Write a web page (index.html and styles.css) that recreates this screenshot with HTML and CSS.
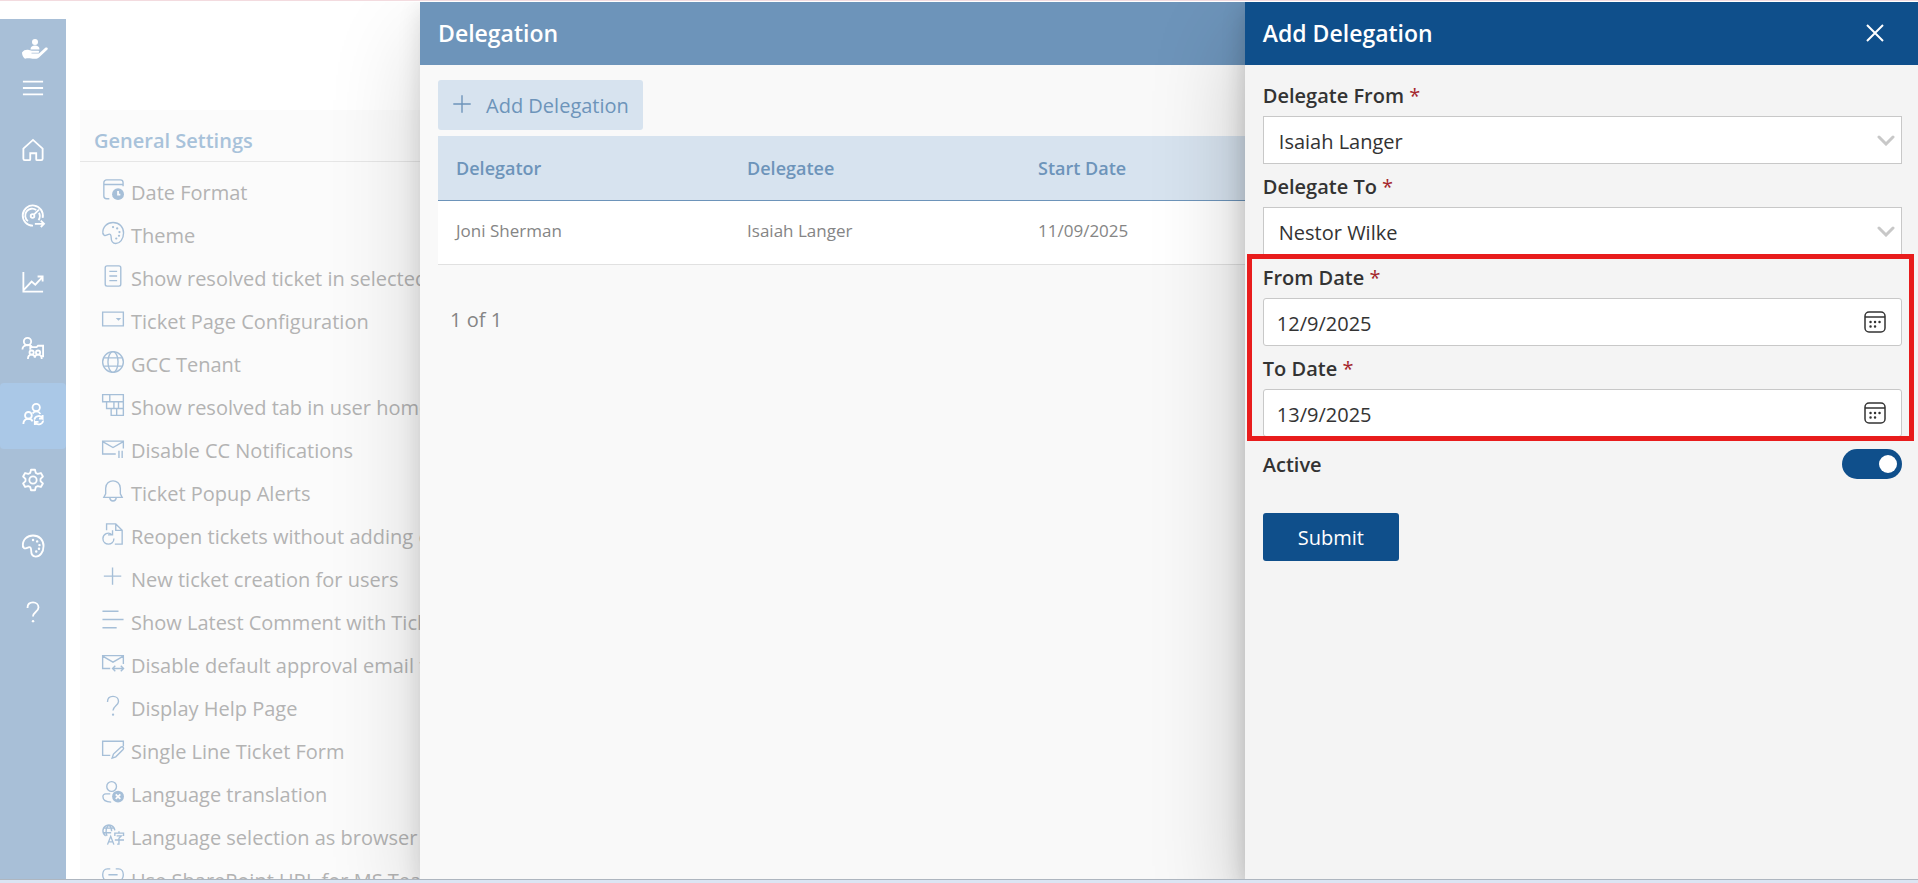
FILE: index.html
```html
<!DOCTYPE html>
<html lang="en">
<head>
<meta charset="utf-8">
<title>Delegation</title>
<link rel="stylesheet" href="styles.css">
</head>
<body>
<main class="app">
  <nav class="rail" aria-label="Main">
    <div class="rail-logo">
      <svg class="icon-logo" viewBox="0 0 26 20"><circle cx="13" cy="3" r="3"/><path d="M8.500 10.500c0-3 2-4 4.500-4s4.500 1 4.500 4z"/><path d="M0 13.500c2-2.500 4-3 7-2.500l3 .8h6c1.500 0 1.500 2 0 2H9.500v.6H17l6-5.500c1.500-1.200 3.500 0 2.500 1.500l-7.500 7c-1.500 1.700-3 2.600-6 2.400-3 0-5-1.200-9 0C1 18 0 16 0 13.500z"/></svg>
    </div>
    <button class="rail-menu" aria-label="Toggle menu"><svg class="icon" viewBox="0 0 24 24"><path d="M1 5h22M1 12h22M1 19h22"/></svg></button>
    <a class="rail-item" href="#" aria-label="Home"><svg class="icon" viewBox="0 0 24 24"><path d="M1.500 10.500 12 1l10.500 9.500V21.500a1.500 1.500 0 0 1-1.500 1.500h-4.500a1 1 0 0 1-1-1v-6.500H9V22a1 1 0 0 1-1 1H3a1.500 1.500 0 0 1-1.500-1.500z"/></svg></a>
    <a class="rail-item" href="#" aria-label="Dashboard"><svg class="icon" viewBox="0 0 24 24"><path d="M12 22.500A11 11 0 1 1 22.500 14"/><path d="M6.500 17.500a7.500 7.500 0 0 1 9-12M18.500 8.500a7.500 7.500 0 0 1-.5 8M13 10.500 18.500 5"/><circle cx="11.500" cy="12" r="2"/><path d="M14 20.500h9.500M20.500 17l3.500 3.500-3.500 3.500"/></svg></a>
    <a class="rail-item" href="#" aria-label="Reports"><svg class="icon" viewBox="0 0 24 24"><path d="M1.500 1v21.500H23M2 20.500l8.500-9 4 3.500 8-8.500M17 6h5.500v5.500"/></svg></a>
    <a class="rail-item" href="#" aria-label="Teams"><svg class="icon" viewBox="0 0 24 24"><circle cx="6" cy="5" r="4"/><path d="M.5 13.500C.5 8 10 7 11 12M9 14v-3h7l1.500-1.500H23V21h-2"/><circle cx="10.500" cy="17" r="2.300"/><circle cx="17.500" cy="17" r="2.300"/><path d="M6.500 24c0-6 7-6 7.500-1.500C14.500 18 21.500 18 21.500 24"/></svg></a>
    <a class="rail-item rail-item-active" href="#" aria-label="Delegation" aria-current="page"><svg class="icon" viewBox="0 0 24 24"><circle cx="15.500" cy="5" r="4"/><circle cx="7" cy="13.500" r="3.700"/><path d="M1.500 23c0-6.500 8-7.500 10-3M11.500 11.500c2-3.500 7-3 8.500.5M13.500 18c1-4.500 7-5 9-1.500V13M22.500 17h-4M23 19.500c-1 4.500-7 5-9 1.500v3M14 20.500h4"/></svg></a>
    <a class="rail-item" href="#" aria-label="Settings"><svg class="icon" viewBox="0 0 24 24"><path stroke-linejoin="round" d="M9.800.8h4.400l.8 3.400 2.200 1.200 3.400-1 2.200 3.800-2.600 2.500v2.600l2.600 2.500-2.200 3.800-3.400-1-2.200 1.200-.8 3.400H9.800L9 19.800l-2.200-1.200-3.400 1-2.200-3.800 2.600-2.500v-2.600L1.200 8.200l2.200-3.800 3.400 1L9 4.200z"/><circle cx="12" cy="12" r="4"/></svg></a>
    <a class="rail-item" href="#" aria-label="Theme"><svg class="icon" viewBox="0 0 24 24"><path d="M1 13C0 5 6 .5 12 .5c7 0 11.500 5 11.500 11.500 0 7-4 11.500-8.500 11.500s-5-3.500-5-6.500-1-4.500-3-3.500l-2 .8c-2 .8-3.300.2-3.500-1.300z"/><path class="dots" d="M12 5.500h.1M16.500 7h.1M19 11h.1M18.500 15h.1M15.500 18h.1"/></svg></a>
    <a class="rail-item" href="#" aria-label="Help"><svg class="icon" viewBox="0 0 24 24"><path d="M6 7.500C6 3.500 8.500 1.500 12 1.500s6 2.500 6 5.500c0 4.500-6 5-6 10"/><path class="dots" d="M12 22h.1"/></svg></a>
  </nav>

  <section class="settings">
    <h2 class="settings-title">General Settings</h2>
    <ul class="settings-list">
      <li><button class="setting"><svg class="icon" viewBox="0 0 24 24"><path d="M8 21.500H5A3 3 0 0 1 2 18.500V4a3 3 0 0 1 3-3h15a3 3 0 0 1 3 3v4M2 6h21"/><circle class="solid" cx="17.500" cy="16.500" r="6.500"/><path class="cut" d="M17.500 13v4H20"/></svg>Date Format</button></li>
      <li><button class="setting"><svg class="icon" viewBox="0 0 24 24"><path d="M1 13C0 5 6 .5 12 .5c7 0 11.500 5 11.500 11.500 0 7-4 11.500-8.500 11.500s-5-3.500-5-6.500-1-4.500-3-3.500l-2 .8c-2 .8-3.300.2-3.500-1.300z"/><path class="dots" d="M12 5.500h.1M16.500 7h.1M19 11h.1M18.500 15h.1M15.500 18h.1"/></svg>Theme</button></li>
      <li><button class="setting"><svg class="icon" viewBox="0 0 24 24"><rect x="3.500" y="1" width="17" height="22" rx="2"/><path d="M8 7h8.500M8 12h8.500M8 17h8.500"/></svg>Show resolved ticket in selected language</button></li>
      <li><button class="setting"><svg class="icon" viewBox="0 0 24 24"><path d="M.7 4.500h22.600v15H.7z"/><path class="solid" d="M15 11h6l-3 3z"/></svg>Ticket Page Configuration</button></li>
      <li><button class="setting"><svg class="icon" viewBox="0 0 24 24"><circle cx="12" cy="12" r="11.300"/><ellipse cx="12" cy="12" rx="5.500" ry="11.300"/><path d="M2 7.500h20M2 16.500h20"/></svg>GCC Tenant</button></li>
      <li><button class="setting"><svg class="icon" viewBox="0 0 24 24"><path d="M.7.7h22.600v22.600H10v-7.500H5V8.500H.7zM.7 8.500h22.600M5 15.800h18.300M8.500.7v7.800M13 8.500v7.300M16 15.800v7.500M18 8.500v7.300"/></svg>Show resolved tab in user home page</button></li>
      <li><button class="setting"><svg class="icon" viewBox="0 0 24 24"><path d="M15 18.500H.7V4.500h22.600v8M.7 5 12 11.500 23.300 5M18.500 15v8M22 15v8"/></svg>Disable CC Notifications</button></li>
      <li><button class="setting"><svg class="icon" viewBox="0 0 24 24"><path d="M2 19h20l-2-4V9c0-5-4-8-8-8S4 4 4 9v6zM8.500 19.500c.5 4.500 6.500 4.500 7 0"/></svg>Ticket Popup Alerts</button></li>
      <li><button class="setting"><svg class="icon" viewBox="0 0 24 24"><path d="M5 8V1h10l7 7v15h-8M15 1v7h7M11.500 8v5h-5M11 13C7 9 1 12 1 17c0 8 12 8 12 0"/></svg>Reopen tickets without adding comments</button></li>
      <li><button class="setting"><svg class="icon" viewBox="0 0 24 24"><path d="M11.500 1.500v19M2 11h19"/></svg>New ticket creation for users</button></li>
      <li><button class="setting"><svg class="icon" viewBox="0 0 24 24"><path d="M.5 2.500H18M.5 11.500h23M.5 20.500H16"/></svg>Show Latest Comment with Ticket</button></li>
      <li><button class="setting"><svg class="icon" viewBox="0 0 24 24"><path d="M9 18H.7V4h22.600v9M.7 4.500 12 11l11.300-6.500M11.500 18h12M14.500 15l-3 3 3 3M20.500 15l3 3-3 3"/></svg>Disable default approval email template</button></li>
      <li><button class="setting"><svg class="icon" viewBox="0 0 24 24"><path d="M6 7.500C6 3.500 8.500 1.500 12 1.500s6 2.500 6 5.500c0 4.500-6 5-6 10"/><path class="dots" d="M12 21.500h.1"/></svg>Display Help Page</button></li>
      <li><button class="setting"><svg class="icon" viewBox="0 0 24 24"><path d="M9 19H.7V3.500h22.600V9M11 22l1.500-4.500 8-7.500c2-1.500 4 .8 2.500 2.500l-8 8z"/></svg>Single Line Ticket Form</button></li>
      <li><button class="setting"><svg class="icon" viewBox="0 0 24 24"><circle cx="10.500" cy="6" r="5.300"/><path d="M9 14H4a3 3 0 0 0-3 3c0 4 4 6 9 6"/><circle class="solid" cx="17.500" cy="17" r="6.500"/><path class="cut" d="m15 14.500 5 5M20 14.500l-5 5"/></svg>Language translation</button></li>
      <li><button class="setting"><svg class="icon" viewBox="0 0 24 24"><path d="M4 13A6.500 6.500 0 1 1 14 7M1 4.500h12M1 9.500h9M5.500 13C3 8 5 3 7.500 1c2 1.500 3 4 3 7M6 22.500l3.500-9 3.500 9M7 19.500h5M14 13v-3h9.500v3M18.500 8v2M16 13h5l-2.500 2.500V22h-2M14 17.500h10"/></svg>Language selection as browser</button></li>
      <li><button class="setting"><svg class="icon" viewBox="0 0 24 24"><path d="M9 2H6C-1 2-1 15 6 15h3M15 2h3c7 0 7 13 0 13h-3M7 8.500h10"/></svg>Use SharePoint URL for MS Teams</button></li>
    </ul>
  </section>

  <section class="panel panel-list" aria-labelledby="list-title">
    <header class="panel-header"><h2 class="panel-title" id="list-title">Delegation</h2></header>
    <div class="list-body">
      <button class="add-button"><svg class="icon" viewBox="0 0 24 24"><path d="M12 2.500v19M2.500 12h19"/></svg>Add Delegation</button>
      <table class="grid">
        <colgroup><col class="grid-col"><col class="grid-col"><col class="grid-col"><col></colgroup>
        <thead><tr><th>Delegator</th><th>Delegatee</th><th>Start Date</th><td></td></tr></thead>
        <tbody><tr><td>Joni Sherman</td><td>Isaiah Langer</td><td>11/09/2025</td><td></td></tr></tbody>
      </table>
      <p class="pager">1 of 1</p>
    </div>
  </section>

  <section class="panel panel-form" aria-labelledby="form-title">
    <header class="panel-header">
      <h2 class="panel-title" id="form-title">Add Delegation</h2>
      <button class="close" aria-label="Close"><svg class="icon-close" viewBox="0 0 18 18"><path d="m1 1 16 16M17 1 1 17"/></svg></button>
    </header>
    <form class="form">
      <div class="field">
        <label class="label" for="from">Delegate From <span class="required">*</span></label>
        <div class="control">
          <select class="input input-select" id="from"><option>Isaiah Langer</option></select>
          <svg class="chevron" viewBox="0 0 18 11"><path d="m2 2 7 7 7-7"/></svg>
        </div>
      </div>
      <div class="field">
        <label class="label" for="to">Delegate To <span class="required">*</span></label>
        <div class="control">
          <select class="input input-select" id="to"><option>Nestor Wilke</option></select>
          <svg class="chevron" viewBox="0 0 18 11"><path d="m2 2 7 7 7-7"/></svg>
        </div>
      </div>
      <div class="dates">
        <div class="field">
          <label class="label" for="start">From Date <span class="required">*</span></label>
          <div class="control">
            <input class="input input-date" id="start" type="text" value="12/9/2025">
            <button class="calendar" type="button" aria-label="Pick from date"><svg class="icon" viewBox="0 0 22 22"><rect x="1" y="1" width="20" height="20" rx="4"/><path d="M1 6h20"/><path class="dots" d="M6.500 11h.1M11 11h.1M15.500 11h.1M6.500 15.500h.1M11 15.500h.1"/></svg></button>
          </div>
        </div>
        <div class="field">
          <label class="label" for="end">To Date <span class="required">*</span></label>
          <div class="control">
            <input class="input input-date" id="end" type="text" value="13/9/2025">
            <button class="calendar" type="button" aria-label="Pick to date"><svg class="icon" viewBox="0 0 22 22"><rect x="1" y="1" width="20" height="20" rx="4"/><path d="M1 6h20"/><path class="dots" d="M6.500 11h.1M11 11h.1M15.500 11h.1M6.500 15.500h.1M11 15.500h.1"/></svg></button>
          </div>
        </div>
      </div>
      <div class="switch-row">
        <label class="switch-label" for="active">Active</label>
        <input class="switch" id="active" type="checkbox" role="switch" checked>
      </div>
      <button class="submit" type="button">Submit</button>
    </form>
  </section>
</main>
<div class="taskbar"></div>
</body>
</html>
```
FILE: styles.css
```css
* { box-sizing: border-box; }

body {
  margin: 0;
  height: 100vh;
  display: flex;
  flex-direction: column;
  background: #fff;
  border-top: 1px solid #f3dbdf;
  padding-top: 1px;
  font-family: "Open Sans", "Noto Sans", sans-serif;
  font-size: 20px;
  line-height: 28px;
  color: #333;
}

button, input, select { font: inherit; color: inherit; }
button { border: 0; padding: 0; background: none; cursor: pointer; }
h2, p, ul { margin: 0; padding: 0; }
ul { list-style: none; }

.app {
  position: relative;
  flex: 1;
  min-height: 0;
  display: flex;
  gap: 14px;
  overflow: hidden;
}

.taskbar { height: 4px; flex: none; background: #dce5f3; border-top: 1px solid #aeb6c0; }

.icon {
  width: 22px;
  height: 22px;
  flex: none;
  fill: none;
  stroke: currentColor;
  stroke-width: 1.5;
  overflow: visible;
}
.dots { stroke-width: 2.4; stroke-linecap: round; }
.solid { fill: currentColor; stroke: none; }
.cut { stroke: #fbfbfb; stroke-width: 2; }

/* Navigation rail */
.rail {
  width: 66px;
  flex: none;
  margin-top: 17px;
  padding-top: 20px;
  background: #a8bfd7;
  color: #fff;
  display: flex;
  flex-direction: column;
}
.rail-logo { display: flex; height: 22px; padding-left: 22px; }
.icon-logo { width: 26px; height: 20px; fill: currentColor; }
.rail-menu, .rail-item {
  display: flex;
  align-items: center;
  justify-content: center;
  flex: none;
  color: inherit;
}
.rail-menu { height: 58px; padding-bottom: 4px; }
.rail-item { height: 66px; padding-bottom: 4px; border-radius: 4px; }
.rail-menu .icon { stroke-width: 2; }
.rail-item .icon { stroke-width: 2; }
.rail-item .dots { stroke-width: 2.6; }
.rail-item-active { background: #aac8e7; }

/* Settings list */
.settings { flex: 1; margin-top: 108px; background: #fbfbfb; overflow: hidden; }
.settings-title {
  padding: 17px 14px 6px;
  border-bottom: 1px solid #e6e6e6;
  font-size: 20px;
  line-height: 28px;
  font-weight: 600;
  color: #a8c2da;
}
.settings-list { padding: 9px 22px; }
.setting {
  display: flex;
  align-items: center;
  gap: 7px;
  height: 43px;
  color: #b3b3b3;
  white-space: nowrap;
}
.setting .icon { color: #a6bfd8; margin-bottom: 5px; }

/* Side panels */
.panel {
  position: absolute;
  top: 0;
  bottom: 0;
  right: 0;
}
.panel-list {
  width: 78.1%;
  background: #f9f9f9;
  color: #858585;
  box-shadow: 0 38px 86px rgba(0, 0, 0, .16), 0 7px 22px rgba(0, 0, 0, .12);
}
.panel-form {
  width: 35.1%;
  background: #f4f4f4;
  box-shadow: 0 38px 86px rgba(0, 0, 0, .22), 0 7px 22px rgba(0, 0, 0, .18);
}
.panel-header {
  display: flex;
  align-items: center;
  justify-content: space-between;
  height: 63px;
  padding: 0 34px 2px 18px;
  background: #6d94ba;
  color: #fff;
}
.panel-form .panel-header { background: #0f4f8b; }
.panel-title { font-size: 23px; line-height: 32px; font-weight: 600; }
.close { display: flex; }
.icon-close { width: 18px; height: 18px; fill: none; stroke: #fff; stroke-width: 2; }

.list-body { padding: 15px 25px 0 18px; }
.add-button {
  display: flex;
  align-items: center;
  gap: 13px;
  height: 50px;
  padding: 1px 14px 0 13px;
  border-radius: 3px;
  background: #d7e3ef;
  color: #6d94ba;
}
.add-button .icon { margin-bottom: 4px; }
.grid { width: 100%; margin-top: 6px; table-layout: fixed; border-collapse: separate; border-spacing: 0; }
.grid-col { width: 291px; }
.grid th, .grid td { height: 64px; padding: 0 18px; text-align: left; }
.grid thead th, .grid thead td {
  height: 65px;
  background: #d7e3ef;
  border-bottom: 1px solid #6d94ba;
  color: #6d94ba;
  font-size: 18px;
  font-weight: 600;
}
.grid tbody td { background: #fff; border-bottom: 1px solid #e1e1e1; font-size: 17px; padding-bottom: 4px; }
.pager { padding: 41px 12px; }

/* Delegation form */
.form { padding: 8px 16px 0 18px; }
.label, .switch-label { font-weight: 600; }
.label { display: block; padding: 9px 0 6px; }
.required { color: #a4262c; font-weight: 400; }
.control { position: relative; display: flex; }
.input {
  width: 100%;
  height: 48px;
  border: 1px solid #c8c8c8;
  background: #fff;
  padding: 2px 13px 0;
}
.input-select { appearance: none; border-radius: 0; padding: 4px 15px 0; }
.input-date { border-radius: 3px; }
.chevron {
  position: absolute;
  right: 7px;
  top: 19px;
  width: 18px;
  height: 11px;
  fill: none;
  stroke: #c8c8c8;
  stroke-width: 3;
  stroke-linecap: round;
  pointer-events: none;
}
.calendar { position: absolute; right: 16px; top: 13px; display: flex; }
.dates { position: relative; }
.dates::after {
  content: "";
  position: absolute;
  inset: -1px -12px -4px -16px;
  border: 5px solid #e81c1c;
  pointer-events: none;
}
.switch-row { display: flex; align-items: center; justify-content: space-between; margin-top: 12px; }
.switch-label { padding-top: 2px; }
.switch {
  appearance: none;
  display: flex;
  align-items: center;
  justify-content: flex-end;
  width: 60px;
  height: 30px;
  margin: 0;
  padding: 0 5px;
  border-radius: 15px;
  background: #0f4f8b;
}
.switch::before { content: ""; width: 18px; height: 18px; border-radius: 50%; background: #fff; }
.submit {
  display: block;
  height: 48px;
  margin-top: 34px;
  padding: 1px 35px 0;
  border-radius: 3px;
  background: #0f4f8b;
  color: #fff;
  font-weight: 500;
}
```
